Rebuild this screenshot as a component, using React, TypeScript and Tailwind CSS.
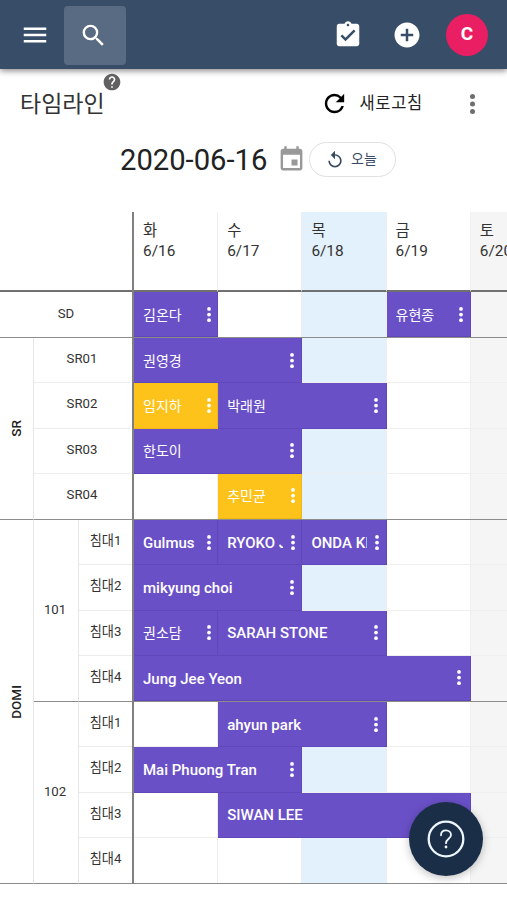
import type { CSSProperties } from 'react';
import {
  MdAddCircle,
  MdAssignmentTurnedIn,
  MdEvent,
  MdHelp,
  MdMenu,
  MdRefresh,
  MdReplay,
  MdSearch,
} from 'react-icons/md';

type Booking = { name: string; start: number; span: number; pending?: boolean };
type Row = { label: string; bookings: Booking[] };

const days = [
  { name: '화', date: '6/16' },
  { name: '수', date: '6/17' },
  { name: '목', date: '6/18' },
  { name: '금', date: '6/19' },
  { name: '토', date: '6/20' },
];

const cellBg = ['bg-white', 'bg-white', 'bg-[#e3f1fc]', 'bg-white', 'bg-[#f5f5f5]'];

const sdRow: Row = {
  label: 'SD',
  bookings: [
    { name: '김온다', start: 1, span: 1 },
    { name: '유현종', start: 4, span: 1 },
  ],
};

const srRows: Row[] = [
  { label: 'SR01', bookings: [{ name: '권영경', start: 1, span: 2 }] },
  {
    label: 'SR02',
    bookings: [
      { name: '임지하', start: 1, span: 1, pending: true },
      { name: '박래원', start: 2, span: 2 },
    ],
  },
  { label: 'SR03', bookings: [{ name: '한도이', start: 1, span: 2 }] },
  { label: 'SR04', bookings: [{ name: '추민균', start: 2, span: 1, pending: true }] },
];

const domiRooms: { room: string; beds: Row[] }[] = [
  {
    room: '101',
    beds: [
      {
        label: '침대1',
        bookings: [
          { name: 'Gulmus', start: 1, span: 1 },
          { name: 'RYOKO JO', start: 2, span: 1 },
          { name: 'ONDA KIM', start: 3, span: 1 },
        ],
      },
      { label: '침대2', bookings: [{ name: 'mikyung choi', start: 1, span: 2 }] },
      {
        label: '침대3',
        bookings: [
          { name: '권소담', start: 1, span: 1 },
          { name: 'SARAH STONE', start: 2, span: 2 },
        ],
      },
      { label: '침대4', bookings: [{ name: 'Jung Jee Yeon', start: 1, span: 4 }] },
    ],
  },
  {
    room: '102',
    beds: [
      { label: '침대1', bookings: [{ name: 'ahyun park', start: 2, span: 2 }] },
      { label: '침대2', bookings: [{ name: 'Mai Phuong Tran', start: 1, span: 2 }] },
      { label: '침대3', bookings: [{ name: 'SIWAN LEE', start: 2, span: 3 }] },
      { label: '침대4', bookings: [] },
    ],
  },
];

function Dots({ className }: { className: string }) {
  return (
    <svg viewBox="0 0 4 16" className={className} fill="currentColor">
      <circle cx="2" cy="2" r="2" />
      <circle cx="2" cy="8" r="2" />
      <circle cx="2" cy="14" r="2" />
    </svg>
  );
}

function Bar({ booking }: { booking: Booking }) {
  const place: CSSProperties = { gridColumn: `${booking.start} / span ${booking.span}` };
  const color = booking.pending
    ? 'bg-[#fec31b] border-[#f0b71a]'
    : 'bg-[#6a50c7] border-[#6047ba]';
  const padding = booking.span > 2 ? 'pr-[9px]' : booking.span > 1 ? 'pr-[7.5px]' : 'pr-[6.5px]';
  // Hangul sits wider than latin at the same size
  const isKorean = /[가-힣]/.test(booking.name);

  return (
    <div
      style={place}
      className={`row-start-1 flex items-center min-w-0 pl-[9px] border-r border-b text-white ${color} ${padding}`}
    >
      <span
        className={`flex-1 min-w-0 pt-[2px] overflow-hidden whitespace-nowrap ${
          isKorean ? 'text-[14px]' : 'text-[15px] font-medium'
        }`}
      >
        {booking.name}
      </span>
      <Dots className="ml-[8px] w-[4px] h-[15px] shrink-0" />
    </div>
  );
}

function DayCells({ bookings, last }: { bookings: Booking[]; last?: boolean }) {
  return (
    <div
      className={`flex-1 grid grid-cols-[repeat(5,84.2px)] ${last ? 'border-b border-[#8c8c8c]' : ''}`}
    >
      {cellBg.map((bg, i) => (
        <div
          key={i}
          style={{ gridColumn: i + 1 }}
          className={`row-start-1 border-r border-[#efefef] ${bg} ${last ? '' : 'border-b'}`}
        />
      ))}
      {bookings.map((b) => (
        <Bar key={b.name} booking={b} />
      ))}
    </div>
  );
}

function BookingRows({ rows }: { rows: Row[] }) {
  return (
    <div className="flex flex-col border-l-2 border-[#808080]">
      {rows.map((row, i) => (
        <div key={row.label} className={`flex ${i === rows.length - 1 ? 'h-[46.25px]' : 'h-[45.25px]'}`}>
          <DayCells bookings={row.bookings} last={i === rows.length - 1} />
        </div>
      ))}
    </div>
  );
}

function Labels({ rows, className }: { rows: Row[]; className: string }) {
  return (
    <div className={`flex flex-col border-b border-[#8c8c8c] ${className}`}>
      {rows.map((row, i) => (
        <div
          key={row.label}
          className={`h-[45.25px] flex items-center justify-center pb-[2px] border-[#ececec] ${
            i === rows.length - 1 ? '' : 'border-b'
          }`}
        >
          {row.label}
        </div>
      ))}
    </div>
  );
}

function GroupLabel({ text }: { text: string }) {
  return (
    <div className="w-[34px] shrink-0 flex items-center justify-center border-r border-r-[#e6e6e6] border-b border-b-[#8c8c8c]">
      <span className="[writing-mode:vertical-rl] rotate-180 text-[13.5px] font-medium text-[#222]">{text}</span>
    </div>
  );
}

function TopBar() {
  return (
    <header className="relative h-[69px] bg-[#384d68] text-white flex items-center shadow-[0_2px_6px_rgba(0,0,0,0.45)]">
      <MdMenu className="ml-[20px] size-[30px]" />
      <button className="ml-[14px] mt-px w-[62px] h-[59px] rounded bg-[#596a83] flex items-center justify-center pr-[3px]" aria-label="search">
        <MdSearch className="size-[29px]" />
      </button>
      <div className="ml-auto flex items-center pr-[19px]">
        <MdAssignmentTurnedIn className="size-[30px]" />
        <MdAddCircle className="ml-[29px] size-[30px]" />
        <div className="ml-[24px] size-[42px] rounded-full bg-[#ea1e63] flex items-center justify-center text-[19px] font-bold">
          C
        </div>
      </div>
    </header>
  );
}

export default function App() {
  return (
    <div className="relative w-[507px] h-[900px] overflow-hidden bg-white text-[#333] font-[Roboto,'Noto_Sans_CJK_KR',sans-serif]">
      <TopBar />

      {/* Page title */}
      <div className="h-[68px] flex items-center pl-[20px] pr-[32px]">
        <h1 className="relative text-[23px] leading-none pt-[2px]">
          타임라인
          <MdHelp className="absolute -right-[17.5px] -top-[19px] size-[20px] text-[#616161]" />
        </h1>
        <button className="ml-auto flex items-center text-[16.5px] tracking-[0.7px] text-[#222]">
          <MdRefresh className="size-[29px] mr-[10px] text-black" />
          <span className="pt-[3px]">새로고침</span>
        </button>
        <Dots className="ml-[47px] mt-px w-[5px] h-[20px] text-[#6e6e6e]" />
      </div>

      {/* Date picker */}
      <div className="h-[75px] flex items-start pl-[120px] pt-[5px]">
        <span className="text-[29.2px] leading-[36px] w-[157px] text-[#222]">2020-06-16</span>
        <MdEvent className="mt-[3px] size-[29px] text-[#999]" />
        <button className="ml-[3px] w-[87px] h-[35px] rounded-full border border-[#e0e0e0] flex items-center justify-center pr-[3px] text-[14px] text-[#3b4a63]">
          <MdReplay className="size-[20px] mr-[6px]" />
          오늘
        </button>
      </div>

      {/* Timeline */}
      <div className="w-[560px] text-[13.2px]">
        <div className="flex h-[80px]">
          <div className="w-[132px] border-b-2 border-[#707070]" />
          <div className="border-l-2 border-[#808080] grid grid-cols-[repeat(5,84.2px)] text-[15.4px] leading-[20px]">
            {days.map((day, i) => (
              <div
                key={day.date}
                className={`pl-[9px] pt-[9px] border-r border-r-[#efefef] border-b-2 border-b-[#707070] ${cellBg[i]}`}
              >
                <div>{day.name}</div>
                <div>{day.date}</div>
              </div>
            ))}
          </div>
        </div>

        <div className="flex h-[46px]">
          <div className="w-[132px] flex items-center justify-center pb-[2px] border-b border-[#8c8c8c]">
            {sdRow.label}
          </div>
          <div className="flex border-l-2 border-[#808080]">
            <DayCells bookings={sdRow.bookings} last />
          </div>
        </div>

        <div className="flex">
          <GroupLabel text="SR" />
          <Labels rows={srRows} className="w-[98px] pr-[2px]" />
          <BookingRows rows={srRows} />
        </div>

        <div className="flex">
          <GroupLabel text="DOMI" />
          <div>
            {domiRooms.map(({ room, beds }) => (
              <div key={room} className="flex">
                <div className="w-[45px] flex items-center justify-center pb-px pr-[2px] border-r border-r-[#e6e6e6] border-b border-b-[#8c8c8c]">
                  {room}
                </div>
                <Labels rows={beds} className="w-[53px]" />
                <BookingRows rows={beds} />
              </div>
            ))}
          </div>
        </div>
      </div>

      {/* Help button */}
      <button
        aria-label="help"
        className="absolute left-[409px] top-[802px] size-[74px] rounded-full bg-[#1a2e47] flex items-center justify-center shadow-[0_2px_8px_rgba(0,0,0,0.25)]"
      >
        <svg viewBox="0 0 38 38" className="size-[38px]" fill="none" stroke="#eef6ff" strokeLinecap="round">
          <circle cx="19" cy="19" r="17.3" strokeWidth="2.3" />
          <path d="M14 15.3c0-3.1 2.1-5 5-5s5 1.9 5 4.6c0 3.8-5 4-5 8.3" strokeWidth="1.8" />
          <circle cx="19" cy="27" r="1.4" fill="#eef6ff" stroke="none" />
        </svg>
      </button>
    </div>
  );
}
